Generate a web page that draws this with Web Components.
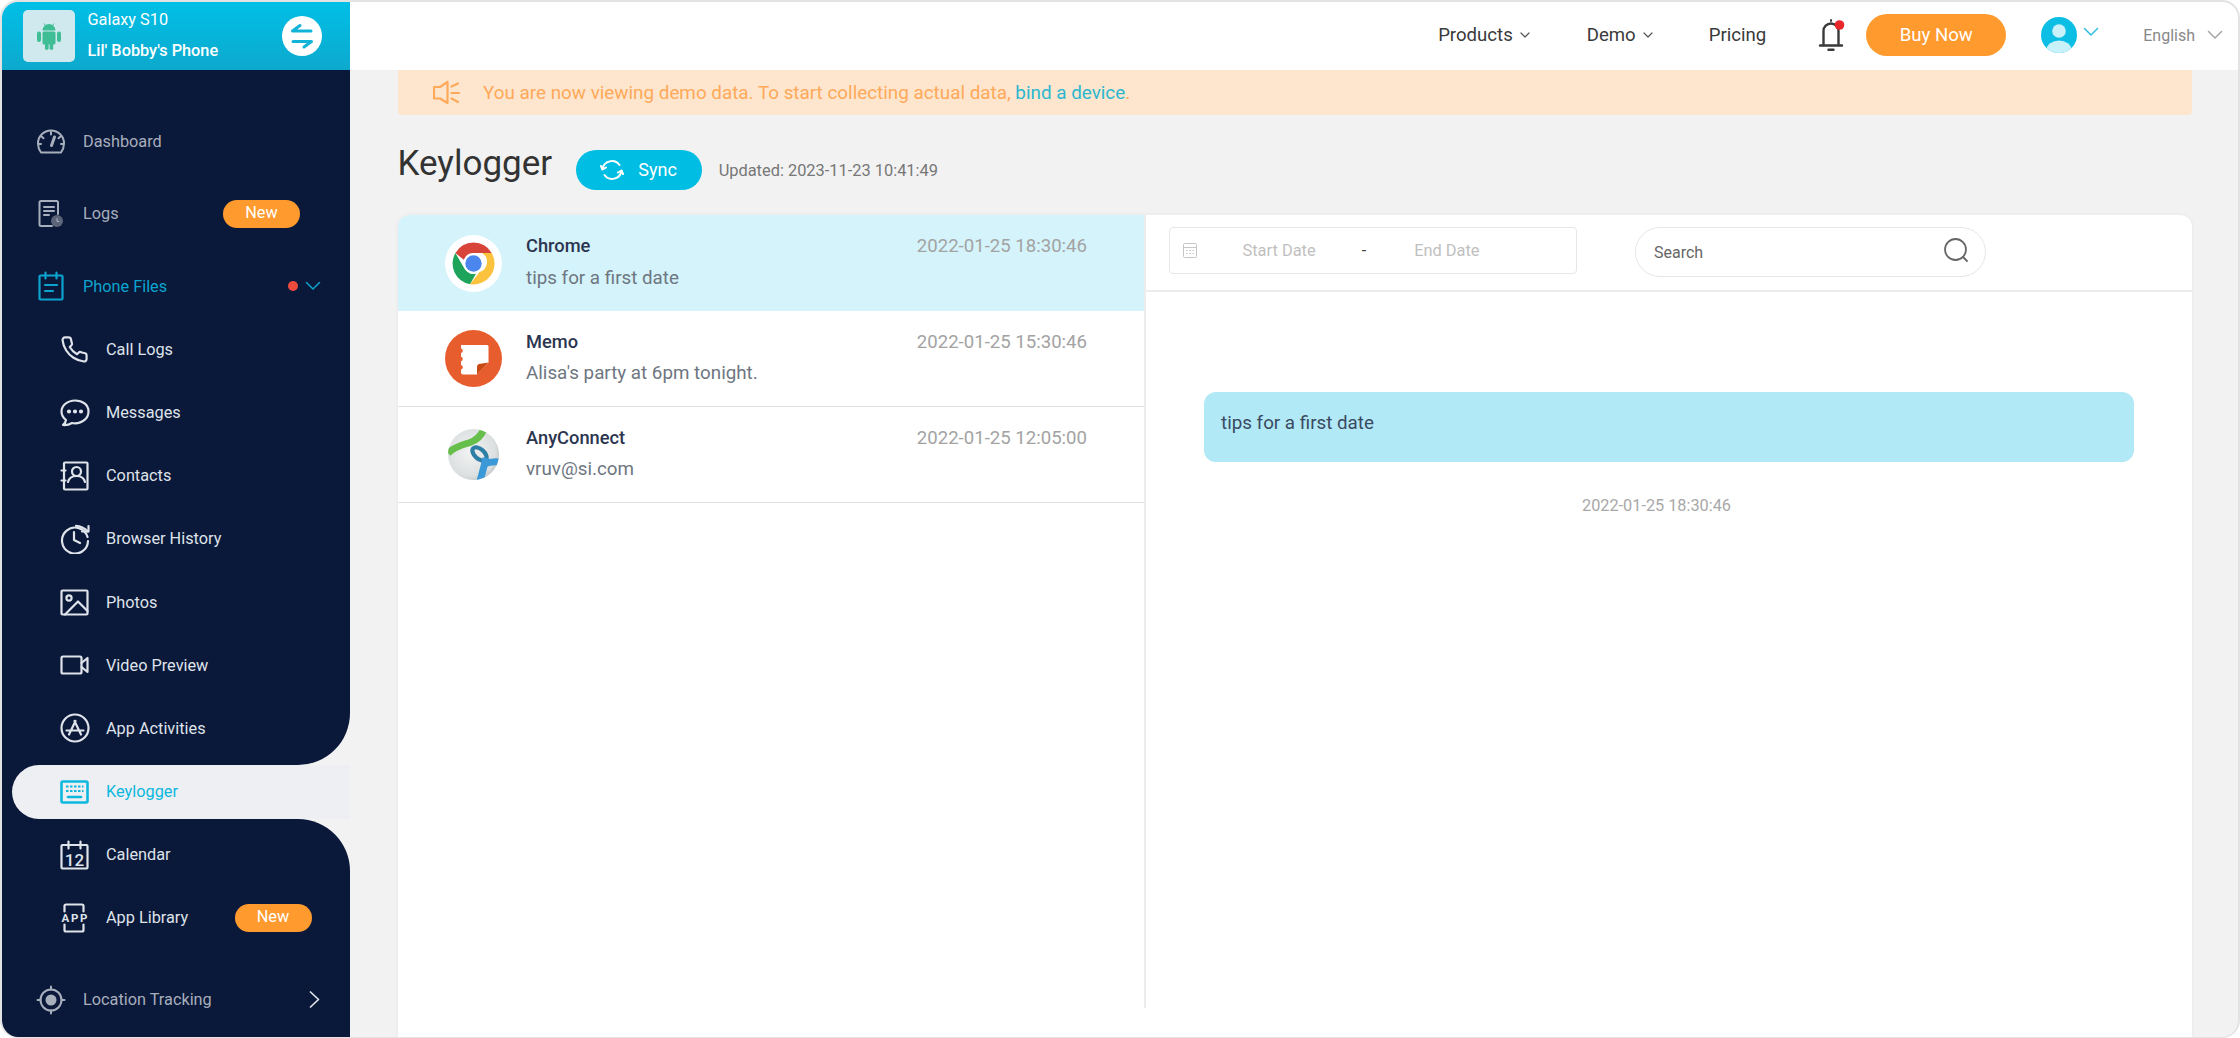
<!DOCTYPE html>
<html lang="en"><head><meta charset="utf-8"><title>Keylogger</title>
<style>
html,body{margin:0;padding:0;background:#fff;font-family:Roboto,"Liberation Sans",sans-serif;}
</style></head><body>
<app-shell>
  <side-bar slot="side"></side-bar>
  <top-bar slot="top"></top-bar>
  <demo-banner slot="main"></demo-banner>
  <page-head slot="main"></page-head>
  <log-card slot="main">
    <log-row slot="list" active time="2022-01-25 18:30:46" name="Chrome" msg="tips for a first date" icon="chrome"></log-row>
    <log-row slot="list" time="2022-01-25 15:30:46" name="Memo" msg="Alisa's party at 6pm tonight." icon="memo" ruled></log-row>
    <log-row slot="list" time="2022-01-25 12:05:00" name="AnyConnect" msg="vruv@si.com" icon="anyconnect" ruled></log-row>
    <detail-toolbar slot="detail"></detail-toolbar>
    <chat-bubble slot="detail" time="2022-01-25 18:30:46">tips for a first date</chat-bubble>
  </log-card>
</app-shell>
<script>
const S='fill="none" stroke="currentColor" stroke-linecap="round" stroke-linejoin="round"';
const ICONS={
 android:`<svg viewBox="0 0 26 30" width="26" height="30" fill="#3fbd95"><path d="M6.5 9.5a6.5 6.5 0 0 1 13 0z"/><path d="M8 2.5l2 3M18 2.5l-2 3" stroke="#3fbd95" stroke-width="1"/><rect x="6.5" y="10.5" width="13" height="13" rx="1.5"/><rect x="1" y="10.5" width="4" height="10.5" rx="2"/><rect x="21" y="10.5" width="4" height="10.5" rx="2"/><rect x="9" y="22" width="3.6" height="7" rx="1.8"/><rect x="13.6" y="22" width="3.6" height="7" rx="1.8"/></svg>`,
 swap:`<svg viewBox="0 0 40 40" width="40" height="40"><circle cx="20" cy="20" r="20" fill="#fff"/><g fill="none" stroke="#12b3d8" stroke-width="3" stroke-linecap="round" stroke-linejoin="round"><path d="M29 15H10.500L18 9.500"/><path d="M11 25.500h18.500L22 31"/></g></svg>`,
 dashboard:`<svg viewBox="0 0 30 26" width="30" height="26" ${S} stroke-width="2"><path d="M5 24.500H25c1.500-2 3-5 3-9a13 13 0 0 0-26 0c0 4 1.500 7 3 9z"/><path d="M15 4v2.500M5.500 8.500l2 1.800M24.500 8.500l-2 1.800M2.500 16h2.500M25 16h2.500"/><path d="M18.500 9l-3 8.500" stroke-width="3"/></svg>`,
 logs:`<svg viewBox="0 0 28 30" width="28" height="30"><path d="M21 15V3.500c0-1-.6-1.500-1.500-1.500H4c-1 0-1.500.6-1.500 1.500v22c0 1 .6 1.500 1.500 1.500h11" ${S} stroke-width="2"/><path d="M7 8h10M7 12h10M7 16h5" ${S} stroke-width="2"/><circle cx="20" cy="22" r="6" fill="#5c647a"/><path d="M20 19.500v3h2" ${S} stroke="#0a1839" stroke-width="1"/></svg>`,
 files:`<svg viewBox="0 0 26 30" width="26" height="30" ${S} stroke-width="2.200"><rect x="1.500" y="4.500" width="23" height="24" rx="1"/><path d="M7.500 1.500v6M18.500 1.500v6M7 14h12M7 20h8"/></svg>`,
 phone:`<svg viewBox="0 0 24 24" width="29" height="29" ${S} stroke-width="1.800"><path d="M22 16.920v3a2 2 0 0 1-2.180 2 19.790 19.790 0 0 1-8.630-3.070 19.500 19.500 0 0 1-6-6 19.790 19.790 0 0 1-3.070-8.670A2 2 0 0 1 4.110 2h3a2 2 0 0 1 2 1.720 12.840 12.840 0 0 0 .7 2.810 2 2 0 0 1-.45 2.110L8.090 9.910a16 16 0 0 0 6 6l1.270-1.270a2 2 0 0 1 2.110-.45 12.840 12.840 0 0 0 2.810.7A2 2 0 0 1 22 16.920z"/></svg>`,
 messages:`<svg viewBox="0 0 30 28" width="30" height="28" ${S} stroke-width="2.200"><path d="M15 1.500C7.500 1.500 1.500 6.500 1.500 12.500c0 3.500 2 6.500 4.500 8.500-.3 2-1.500 4-3 5 3 .3 6.500-.5 9-2 1 .2 2 .3 3 .3 7.500 0 13.500-5 13.500-11.800S22.500 1.500 15 1.500z"/><circle cx="9" cy="12.500" r="1" fill="currentColor"/><circle cx="15" cy="12.500" r="1" fill="currentColor"/><circle cx="21" cy="12.500" r="1" fill="currentColor"/></svg>`,
 contacts:`<svg viewBox="0 0 29 30" width="29" height="30" ${S} stroke-width="2.200"><rect x="4" y="1.500" width="23.500" height="27" rx="1"/><circle cx="16.500" cy="10.500" r="4.500"/><path d="M8 21c1-4 4.500-6 8.500-6s7.500 2 8.500 6M1.500 9.500h4M1.500 19.500h4"/></svg>`,
 history:`<svg viewBox="0 0 30 30" width="30" height="30" ${S} stroke-width="2.200"><path d="M27.500 13A13 13 0 1 0 28 17"/><path d="M14 8v8l6 3"/><path d="M22 7.500h6.500V2"/><path d="M16 1.800C21 2 25 4.500 28 7.500"/></svg>`,
 photos:`<svg viewBox="0 0 29 27" width="29" height="27" ${S} stroke-width="2.200"><rect x="1.500" y="1.500" width="26" height="24" rx="1"/><circle cx="9" cy="9" r="2.600"/><path d="M5 25.500l13-13 9.500 9.500"/></svg>`,
 video:`<svg viewBox="0 0 29 20" width="29" height="20" ${S} stroke-width="2.200"><rect x="1.500" y="1.500" width="20" height="17" rx="1.500"/><path d="M21.500 8l6-5v14l-6-5"/></svg>`,
 appact:`<svg viewBox="0 0 30 30" width="30" height="30" ${S} stroke-width="2.200"><circle cx="15" cy="15" r="13.500"/><path d="M9 21.500L15.500 8M21 21.500L14.500 8M6.500 17.500h17"/></svg>`,
 keyboard:`<svg viewBox="0 0 29 24" width="29" height="24" ${S} stroke-width="2.600"><rect x="1.500" y="1.500" width="26" height="21" rx="1.500"/><path d="M8 17h13" stroke-width="2.600"/><path d="M6 6.500h2.500M10 6.500h2.500M14 6.500h2.500M18 6.500h2.500M22 6.500h1.500M6 11h2.500M10 11h2.500M14 11h2.500M18 11h2.500M22 11h1.500" stroke-width="2.200" stroke-linecap="butt"/></svg>`,
 calendar:`<svg viewBox="0 0 29 30" width="29" height="30"><g ${S} stroke-width="2.200"><rect x="1.500" y="5" width="26" height="23.500" rx="1"/><path d="M8.500 1.500v7M20.500 1.500v7"/></g><text x="14.500" y="25.500" text-anchor="middle" font-family="Roboto,sans-serif" font-size="17" font-weight="500" fill="currentColor">12</text></svg>`,
 applib:`<svg viewBox="0 0 29 30" width="29" height="30"><g ${S} stroke-width="2.200"><path d="M4.500 8.500V3c0-1 .6-1.500 1.500-1.500h16c1 0 1.500.6 1.500 1.500v5.500M4.500 21.500V27c0 1 .6 1.500 1.500 1.500h16c1 0 1.500-.6 1.500-1.500v-5.500"/></g><text x="14.500" y="19.200" text-anchor="middle" font-family="Roboto,sans-serif" font-size="11.500" font-weight="700" fill="currentColor" textLength="26">APP</text></svg>`,
 location:`<svg viewBox="0 0 30 30" width="30" height="30"><g ${S} stroke-width="2"><circle cx="15" cy="15" r="10.500"/><path d="M15 1.500v3M15 25.500v3M1.500 15h3M25.500 15h3"/></g><circle cx="15" cy="15" r="5.500" fill="currentColor"/></svg>`,
 down:`<svg viewBox="0 0 16 10" width="16" height="10" ${S} stroke-width="1.500"><path d="M1.500 1.500L8 8l6.500-6.500"/></svg>`,
 chev:`<svg viewBox="0 0 10 6" width="10" height="6" ${S} stroke-width="1.200"><path d="M1 1l4 4 4-4"/></svg>`,
 right:`<svg viewBox="0 0 11 17" width="11" height="17" ${S} stroke-width="1.700"><path d="M1.500 1L9.500 8.500l-8 7.500"/></svg>`,
 bell:`<svg viewBox="0 0 30 38" width="30" height="38"><g ${S} stroke="#747474" stroke-width="2.400"><path d="M7.500 29V15a7.500 7.500 0 0 1 15 0v14"/><path d="M4 29.500h22M12.500 33.800h5"/><path d="M15 4v1" stroke-width="2"/></g><circle cx="23.500" cy="9" r="4.800" fill="#e8262c"/></svg>`,
 avatar:`<svg viewBox="0 0 36 36" width="36" height="36"><defs><clipPath id="ac"><circle cx="18" cy="18" r="18"/></clipPath></defs><circle cx="18" cy="18" r="18" fill="#0cbde4"/><g clip-path="url(#ac)" fill="#c8f1fa"><circle cx="18" cy="14" r="6.800"/><ellipse cx="18" cy="33" rx="12.500" ry="9.500"/></g></svg>`,
 speaker:`<svg viewBox="0 0 30 26" width="30" height="26" ${S} stroke="#ff9f43" stroke-width="2.200"><path d="M1 7H7L14.500 2V23L7 18.500H1z"/><path d="M18.500 6.500L25 3.500M18.500 13H26M18.500 18.500L25 22"/></svg>`,
 sync:`<svg viewBox="0 0 24 24" width="24" height="24" ${S} stroke="#fff" stroke-width="2"><path d="M2.500 11A9.500 9.500 0 0 1 19.500 7"/><path d="M21.500 13A9.500 9.500 0 0 1 4.500 17"/><path d="M1 8l1.500 3.500L6 9.500M23 16l-1.500-3.500L18 14.500"/></svg>`,
 cal:`<svg viewBox="0 0 14 15" width="14" height="15" fill="none" stroke="#c6c6c6" stroke-width="1"><rect x=".5" y=".5" width="13" height="14" rx="1"/><path d="M.5 4.500h13M3 7.500h1.500M6.300 7.500h1.500M9.500 7.500H11M3 10.500h1.500M6.300 10.500h1.500M9.500 10.500H11"/></svg>`,
 search:`<svg viewBox="0 0 26 26" width="26" height="26" ${S} stroke="#555" stroke-width="1.800"><circle cx="12.500" cy="12.500" r="10.500"/><path d="M20 20l4 4"/></svg>`,
 chrome:`<svg viewBox="0 0 57 57" width="57" height="57"><circle cx="28.500" cy="28.500" r="28.500" fill="#fff"/><path d="M28.500 7.500A21 21 0 0 1 46.700 18H28.500a10.500 10.500 0 0 0-9.800 6.800L10.400 18A21 21 0 0 1 28.500 7.500z" fill="#d8433a"/><path d="M10.400 18l9.100 15.800A10.500 10.500 0 0 0 31 38.700L25 49.200A21 21 0 0 1 10.400 18z" fill="#1ea35a"/><path d="M46.700 18a21 21 0 0 1-21.700 31.200l9.600-12.200A10.500 10.500 0 0 0 37 18z" fill="#fbc33d"/><circle cx="28.500" cy="28.500" r="10" fill="#fff"/><circle cx="28.500" cy="28.500" r="8.200" fill="#4a86ed"/></svg>`,
 memo:`<svg viewBox="0 0 57 57" width="57" height="57"><circle cx="28.500" cy="28.500" r="28.500" fill="#e75d2e"/><path d="M16 15H42q1.500 0 1.500 1.500V32.500L32 44.500H18q-2 0-2-2z" fill="#fff"/><circle cx="15.500" cy="20.800" r="2.300" fill="#e75d2e"/><circle cx="15.500" cy="29" r="2.300" fill="#e75d2e"/><circle cx="15.500" cy="37.200" r="2.300" fill="#e75d2e"/><path d="M43.500 32.500L34 34Q32 34.500 32 37V44.500z" fill="#c84a12"/></svg>`,
 anyconnect:`<svg viewBox="0 0 51 51" width="51" height="51"><defs><radialGradient id="ag" cx=".45" cy=".45" r=".65"><stop offset="0" stop-color="#f2f3f3"/><stop offset=".75" stop-color="#dcdfe0"/><stop offset="1" stop-color="#aeb2b4"/></radialGradient><clipPath id="ab"><circle cx="25.500" cy="25.500" r="25.500"/></clipPath></defs><circle cx="25.500" cy="25.500" r="25.500" fill="url(#ag)"/><g clip-path="url(#ab)" fill="none"><path d="M0 24C8 17 14 16 22 13.500C29 11 33 7 36 0" stroke="#66bf4a" stroke-width="7"/><ellipse cx="31.500" cy="25" rx="8.500" ry="4.800" transform="rotate(42 31.500 25)" stroke="#2e7fa6" stroke-width="4.200" fill="#e8eaea"/><path d="M38 29Q36 38 32 52" stroke="#3b99d8" stroke-width="7"/><path d="M36 35Q43 32 52 33" stroke="#3b99d8" stroke-width="7"/></g></svg>`
};
function def(name,css,html){
  customElements.define(name,class extends HTMLElement{
    connectedCallback(){
      if(this.shadowRoot)return;
      const r=this.attachShadow({mode:'open'});
      r.innerHTML=`<style>${css}</style>${typeof html==='function'?html(this):html}`;
    }
  });
}
def('ui-icon',':host{display:inline-flex;align-items:center;justify-content:center;line-height:0}',h=>ICONS[h.getAttribute('name')]||'');
def('app-shell',`
 :host{display:flex;box-sizing:border-box;width:2240px;height:1038px;border:2px solid #e3e3e3;border-bottom-width:1px;border-radius:18px;overflow:hidden;background:#f2f2f2}
 .col{flex:1;min-width:0;display:flex;flex-direction:column}
 .main{flex:1;min-height:0;display:flex;flex-direction:column;padding:0 46px 0 47.500px}
`,`<slot name="side"></slot><div class="col"><slot name="top"></slot><div class="main"><slot name="main"></slot></div></div>`);
def('nav-item',`
 :host{display:flex;align-items:center;box-sizing:border-box;height:63.200px;font-size:16.300px;color:#dfe3ea;padding-left:57px}
 :host([top]){height:72.500px;padding-left:33px;color:#a7aebc}
 :host([current]){color:#0ca4cf}
 .i{width:31px;height:31px;display:flex;align-items:center;justify-content:center;color:inherit;flex:none}
 .t{margin-left:16px;flex:1;white-space:nowrap}
 :host([top]) .t{margin-left:17px}
`,h=>`<span class="i"><ui-icon name="${h.getAttribute('icon')}"></ui-icon></span><span class="t"><slot></slot></span><slot name="end"></slot>`);
def('new-badge',`:host{display:inline-flex;align-items:center;justify-content:center;width:77px;height:28px;border-radius:14px;background:#ff9a2e;color:#fff;font-size:16.300px;padding-bottom:2px;box-sizing:border-box}`,`<slot></slot>`);
def('side-bar',`
 :host{display:flex;flex-direction:column;width:348px;flex:none;font-family:Roboto,"Liberation Sans",sans-serif}
 .hd{height:68px;flex:none;display:flex;align-items:center;background:linear-gradient(180deg,#00bfe6,#0da9cd);color:#fff;padding-left:21px}
 .pic{width:52px;height:52px;border-radius:5px;background:#cfe9ee;display:flex;align-items:center;justify-content:center}
 .who{margin-left:12.500px;flex:1;display:flex;flex-direction:column;gap:10px;font-size:16.300px;line-height:21px;padding-bottom:2px}
 .who b{font-weight:500}
 .sw{margin-right:28px;display:flex}
 .up{flex:none;height:694.600px;box-sizing:border-box;background:#0a1839;border-bottom-right-radius:52px;padding-top:35px;padding-bottom:4.500px;display:flex;flex-direction:column}
 .act{flex:none;background:#0a1839;height:54px}
 .pill{height:54px;margin-left:10px;border-radius:27px 0 0 27px;background:#edeff3;display:flex;align-items:center;box-sizing:border-box;padding-left:47px;color:#0cb8de;font-size:16.300px}
 .pill ui-icon{width:31px;margin-right:16px}
 .down{flex:1;background:#0a1839;border-top-right-radius:52px;padding-top:4.500px;display:flex;flex-direction:column}
 .dot{width:10px;height:10px;border-radius:50%;background:#ee4b3e;margin-right:7px}
 .chev{margin-right:29.500px;color:#0ca4cf;display:flex}
 .pf{margin-top:4.750px;height:63px}
 new-badge.a{margin-right:50px}
 new-badge.b{margin-right:38.500px}
 .loc{margin-top:19px;height:63px}
`,`
 <div class="hd"><div class="pic"><ui-icon name="android"></ui-icon></div>
  <div class="who"><span>Galaxy S10</span><b>Lil' Bobby's Phone</b></div>
  <div class="sw"><ui-icon name="swap"></ui-icon></div></div>
 <div class="up">
  <nav-item top icon="dashboard">Dashboard</nav-item>
  <nav-item top icon="logs">Logs<new-badge class="a" slot="end">New</new-badge></nav-item>
  <nav-item top current class="pf" icon="files">Phone Files<span class="dot" slot="end"></span><span class="chev" slot="end"><ui-icon name="down"></ui-icon></span></nav-item>
  <nav-item icon="phone">Call Logs</nav-item>
  <nav-item icon="messages">Messages</nav-item>
  <nav-item icon="contacts">Contacts</nav-item>
  <nav-item icon="history">Browser History</nav-item>
  <nav-item icon="photos">Photos</nav-item>
  <nav-item icon="video">Video Preview</nav-item>
  <nav-item icon="appact">App Activities</nav-item>
 </div>
 <div class="act"><div class="pill"><ui-icon name="keyboard"></ui-icon><span>Keylogger</span></div></div>
 <div class="down">
  <nav-item icon="calendar">Calendar</nav-item>
  <nav-item icon="applib">App Library<new-badge class="b" slot="end">New</new-badge></nav-item>
  <nav-item top class="loc" icon="location">Location Tracking<span class="chev" slot="end" style="color:#dfe3ea;margin-right:30px"><ui-icon name="right"></ui-icon></span></nav-item>
 </div>
`);
def('top-bar',`
 :host{display:flex;align-items:center;justify-content:flex-end;height:68px;box-sizing:border-box;flex:none;background:#fff;font-size:18.600px;color:#3a3a3a;padding:0 15px 2px 0;font-family:Roboto,"Liberation Sans",sans-serif}
 .m{display:flex;align-items:center}
 .c{margin-left:7px;color:#555}
 .buy{width:140px;height:42px;border-radius:21px;background:#ff9a2e;color:#fff;display:flex;align-items:center;justify-content:center;margin-left:20.500px}
 .lang{font-size:16px;color:#888;margin-left:44px}
`,`
 <span class="m">Products<ui-icon class="c" name="chev"></ui-icon></span>
 <span class="m" style="margin-left:57px">Demo<ui-icon class="c" name="chev"></ui-icon></span>
 <span class="m" style="margin-left:56px">Pricing</span>
 <span class="m" style="margin-left:49.500px"><ui-icon name="bell"></ui-icon></span>
 <span class="buy">Buy Now</span>
 <span class="m" style="margin-left:35px"><ui-icon name="avatar"></ui-icon></span>
 <span class="m" style="margin-left:6px;color:#2cc0de;margin-top:-6px"><ui-icon name="down"></ui-icon></span>
 <span class="lang">English</span>
 <span class="m" style="margin-left:12px;color:#a5a5a5"><ui-icon name="down"></ui-icon></span>
`);
def('demo-banner',`
 :host{display:flex;align-items:center;height:45px;flex:none;background:#fde6cd;border-radius:0 0 4px 4px;color:#ffa95a;font-size:18.850px;padding-left:35.500px;font-family:Roboto,"Liberation Sans",sans-serif}
 span{margin-left:20px}
 a{color:#2cb7d0;text-decoration:none}
`,`<ui-icon name="speaker"></ui-icon><span>You are now viewing demo data. To start collecting actual data, <a>bind a device</a>.</span>`);
def('page-head',`
 :host{display:flex;align-items:center;height:100px;flex:none;padding-top:10.500px;box-sizing:border-box;font-family:Roboto,"Liberation Sans",sans-serif}
 h1{margin:0 0 12px;font-weight:400;font-size:35px;color:#333;line-height:42px}
 .s{margin-left:23.500px;width:126px;height:40px;border-radius:20px;background:#00bde3;color:#fff;font-size:18px;display:flex;align-items:center;justify-content:center;gap:14px}
 .s span{margin-bottom:1px}
 .u{margin-left:17px;font-size:16.400px;color:#777}
`,`<h1>Keylogger</h1><span class="s"><ui-icon name="sync"></ui-icon><span>Sync</span></span><span class="u">Updated: 2023-11-23 10:41:49</span>`);
def('log-card',`
 :host{display:flex;flex:1;min-height:0;background:#fff;border-radius:12px 12px 0 0;overflow:hidden;box-shadow:0 0 4px rgba(0,0,0,.05)}
 .l{width:746.500px;flex:none;height:793px;border-right:2px solid #ececec;display:flex;flex-direction:column}
 .r{flex:1;min-width:0;display:flex;flex-direction:column}
`,`<div class="l"><slot name="list"></slot></div><div class="r"><slot name="detail"></slot></div>`);
def('log-row',`
 :host{display:flex;box-sizing:border-box;height:96px;background:#fff;align-items:flex-start;padding:0 57px 0 47.500px;font-family:Roboto,"Liberation Sans",sans-serif}
 :host([active]){background:#d4f3fa;height:95.500px}
 :host([ruled]){border-bottom:1.500px solid #e2e2e2}
 .ic{width:57px;height:57px;margin-top:19.500px;display:flex;align-items:center;justify-content:center;flex:none}
 .tx{margin-left:24px;flex:1;display:flex;flex-direction:column;padding-top:20px}
 .n{font-size:18.300px;font-weight:500;color:#2c3550;line-height:22px}
 .m{font-size:18.800px;color:#6e7681;line-height:22px;margin-top:9.500px}
 .t{font-size:18.600px;color:#a3a3a3;line-height:22px;padding-top:20px;white-space:nowrap}
`,h=>`<span class="ic"><ui-icon name="${h.getAttribute('icon')}"></ui-icon></span><span class="tx"><span class="n">${h.getAttribute('name')}</span><span class="m">${h.getAttribute('msg')}</span></span><span class="t">${h.getAttribute('time')}</span>`);
def('detail-toolbar',`
 :host{display:flex;align-items:flex-start;height:76.500px;box-sizing:border-box;border-bottom:2px solid #ececec;padding:12px 0 0 22.500px;font-family:Roboto,"Liberation Sans",sans-serif}
 .d{width:408.500px;height:47px;box-sizing:border-box;border:1.500px solid #e6e6e6;border-radius:4px;display:flex;align-items:center;padding-left:13px;font-size:16.400px;color:#bfbfbf}
 .d span.a{margin-left:46px}.d span.b{margin-left:46px;color:#444}.d span.c{margin-left:48px}
 .q{margin-left:58px;width:351px;height:50px;box-sizing:border-box;border:1.500px solid #e6e6e6;border-radius:25px;display:flex;align-items:center;justify-content:space-between;padding:0 16px 0 18px;font-size:16px;color:#666}
 .q span{padding-top:1.500px}.q ui-icon{margin-top:-4px}
`,`<div class="d"><ui-icon name="cal"></ui-icon><span class="a">Start Date</span><span class="b">-</span><span class="c">End Date</span></div><div class="q"><span>Search</span><ui-icon name="search"></ui-icon></div>`);
def('chat-bubble',`
 :host{display:flex;flex-direction:column;align-items:center;padding:100px 58px 0;font-family:Roboto,"Liberation Sans",sans-serif}
 .b{align-self:stretch;height:70px;background:#b1e9f7;border-radius:12px;box-sizing:border-box;padding:20px 17px 0;font-size:18.800px;line-height:22px;color:#3b4a60}
 .t{margin:33px 25px 0 0;font-size:16.300px;color:#a8a8a8;line-height:22px}
`,h=>`<div class="b"><slot></slot></div><div class="t">${h.getAttribute('time')}</div>`);
</script>
</body></html>
